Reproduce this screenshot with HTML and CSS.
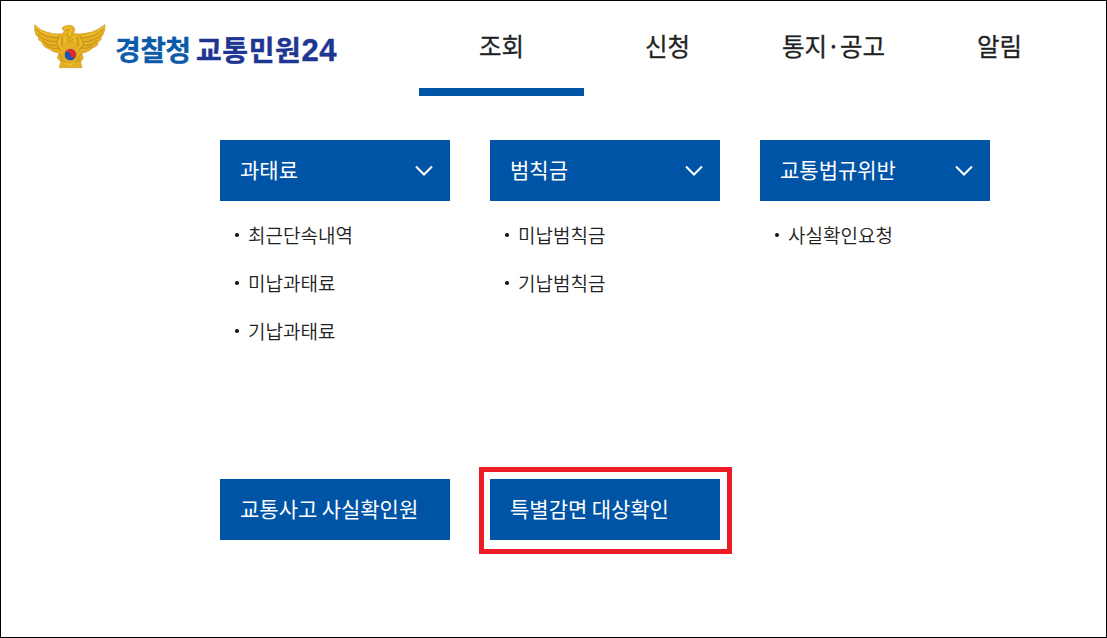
FILE: index.html
```html
<!DOCTYPE html>
<html lang="ko">
<head>
    <meta charset="UTF-8">
    <meta name="viewport" content="width=device-width, initial-scale=1.0">
    <title>경찰청 교통민원24</title>
    <link rel="stylesheet" href="styles.css">
</head>
<body>
    <header>
        <a class="logo" href="#">
            <!-- eagle emblem -->
            <svg class="emblem" viewBox="0 0 216 138" aria-hidden="true">
                <path fill="#e5b01f" stroke="#cf9a3c" stroke-width="2" stroke-linejoin="round" d="M2 5 L20 20 40 28 58 32 74 33 86 32 91 24 85 18 86 13 94 9 103 7 114 8 121 14 122 23 119 32 136 33 154 31 174 27 193 18 213 5 212 22 207 35 201 43 202 49 193 57 190 67 178 74 167 82 156 88 143 91 148 105 140 117 144 134 76 134 79 120 82 117 70 105 75 90 58 86 47 79 34 73 26 64 24 57 14 51 13 43 6 35 2 21Z"/>
                <g fill="none" stroke="#bd8422" stroke-width="2.5" stroke-linecap="round">
                    <path d="M10 20 C24 39 43 42 70 45"/>
                    <path d="M13 36 C30 52 46 55 65 56"/>
                    <path d="M25 53 C38 66 51 68 67 67"/>
                    <path d="M39 68 C51 77 61 77 75 75"/>
                    <path d="M205 20 C187 38 170 42 146 45"/>
                    <path d="M201 36 C185 51 168 55 148 56"/>
                    <path d="M190 53 C177 65 164 68 148 67"/>
                    <path d="M176 68 C165 76 155 77 141 75"/>
                    <path d="M74 39 L67 62 79 83 M84 43 L84 70 M138 39 L149 63 134 83 M130 43 L132 70"/>
                    <path d="M75 92 L85 105 80 116 M143 92 L131 105 136 116 M88 113 L98 124 M128 113 L117 124"/>
                </g>
                <g fill="none" stroke="#f3c832" stroke-width="3" stroke-linecap="round">
                    <path d="M8 14 C27 33 45 35 70 38"/>
                    <path d="M207 14 C187 33 167 36 147 38"/>
                    <path d="M93 15 L106 12 113 20 106 36 122 45"/>
                    <path d="M77 51 L74 65 84 78 M94 44 L90 58 M140 50 L143 66 132 78 M121 50 L127 58"/>
                    <path d="M91 121 L107 126 122 121"/>
                </g>
                <path fill="none" stroke="#bd8422" stroke-width="2" d="M96 22 L105 22 M98 33 L107 47 116 34 M99 49 L107 58 116 49"/>
                <circle cx="109" cy="95" r="19" fill="#f0c02d" stroke="#b0782a" stroke-width="1"/>
                <circle cx="109" cy="95" r="17" fill="#1556b4"/>
                <path fill="#e6252d" d="M92 95 A17 17 0 0 1 126 95 A8.5 8.5 0 0 1 109 95 A8.5 8.5 0 0 0 92 95Z"/>
            </svg>
            <span class="agency">경찰청</span>
            <span class="service">교통민원<span class="num">24</span></span>
        </a>
        <nav>
            <ul>
                <li class="active"><a href="#">조회</a></li>
                <li><a href="#">신청</a></li>
                <li><a href="#">통지<span class="dot">·</span>공고</a></li>
                <li><a href="#">알림</a></li>
            </ul>
        </nav>
    </header>
    <main>
        <section>
            <a class="menu-btn" href="#">
                과태료
                <svg class="arrow" viewBox="0 0 18 12" aria-hidden="true"><path d="M1 1.5 L9 9.5 17 1.5"/></svg>
            </a>
            <ul class="sub">
                <li><a href="#">최근단속내역</a></li>
                <li><a href="#">미납과태료</a></li>
                <li><a href="#">기납과태료</a></li>
            </ul>
        </section>
        <section>
            <a class="menu-btn" href="#">
                범칙금
                <svg class="arrow" viewBox="0 0 18 12" aria-hidden="true"><path d="M1 1.5 L9 9.5 17 1.5"/></svg>
            </a>
            <ul class="sub">
                <li><a href="#">미납범칙금</a></li>
                <li><a href="#">기납범칙금</a></li>
            </ul>
        </section>
        <section>
            <a class="menu-btn" href="#">
                교통법규위반
                <svg class="arrow" viewBox="0 0 18 12" aria-hidden="true"><path d="M1 1.5 L9 9.5 17 1.5"/></svg>
            </a>
            <ul class="sub">
                <li><a href="#">사실확인요청</a></li>
            </ul>
        </section>
        <section>
            <a class="menu-btn" href="#">교통사고 사실확인원</a>
        </section>
        <section class="marked">
            <a class="menu-btn" href="#">특별감면 대상확인</a>
        </section>
    </main>
</body>
</html>
```
FILE: styles.css
```css
* {
    box-sizing: border-box;
}

body {
    margin: 0;
    height: 638px;
    border: 1px solid #000;
    background: #fff;
    color: #222;
    font-family: "Noto Sans CJK KR", sans-serif;
    overflow: hidden;
}

ul {
    list-style: none;
    margin: 0;
    padding: 0;
}

a {
    color: inherit;
    text-decoration: none;
}

header {
    display: flex;
    height: 95px;
    padding-left: 33px;
}

.logo {
    display: flex;
    width: 385px;
    font-weight: 700;
    font-size: 28px;
    line-height: 40px;
    padding-top: 22px;
    white-space: nowrap;
}

.emblem {
    width: 72px;
    height: 46px;
    margin-right: 9px;
}

.agency {
    width: 81px;
    padding-top: 6px;
    color: #0c5aa8;
    letter-spacing: -0.6px;
    -webkit-text-stroke: 0.3px #0c5aa8;
}

.service {
    padding-top: 6px;
    color: #1f3592;
    letter-spacing: 0.6px;
    -webkit-text-stroke: 0.4px #1f3592;
}

.num {
    font-family: "Liberation Sans", sans-serif;
    font-size: 31px;
    font-weight: 700;
    letter-spacing: 0.5px;
}

nav ul {
    display: flex;
    gap: 1px;
}

nav li {
    width: 165px;
    height: 95px;
    padding-top: 27px;
    text-align: center;
    font-size: 24.5px;
    line-height: 36px;
    -webkit-text-stroke: 0.3px #222;
}

nav li.active {
    border-bottom: 8px solid #0054a6;
}

.dot {
    margin: 0 3px;
}

main {
    display: grid;
    grid-template-columns: repeat(3, 230px);
    grid-template-rows: 339px 61px;
    column-gap: 40px;
    padding: 44px 0 0 219px;
}

.menu-btn {
    display: flex;
    align-items: center;
    justify-content: space-between;
    height: 61px;
    padding: 0 17px 4px 20px;
    background: #0054a6;
    color: #fff;
    font-size: 21px;
    word-spacing: -1.5px;
}

.arrow {
    width: 18px;
    height: 12px;
    margin-top: 4px;
    fill: none;
    stroke: #fff;
    stroke-width: 2;
}

.sub {
    padding: 10px 0 0 15px;
}

.sub li {
    display: flex;
    align-items: center;
    height: 48px;
    font-size: 19px;
    font-weight: 350;
}

.sub li a {
    padding-bottom: 1px;
}

.sub li::before {
    content: "";
    width: 4px;
    height: 4px;
    margin-right: 9px;
    border-radius: 50%;
    background: #111;
}

/* red frame around the highlighted button */
.marked {
    position: relative;
}

.marked::after {
    content: "";
    position: absolute;
    top: -12px;
    right: -12px;
    bottom: -14px;
    left: -11px;
    border: 5px solid #ed1c24;
    pointer-events: none;
}
```
